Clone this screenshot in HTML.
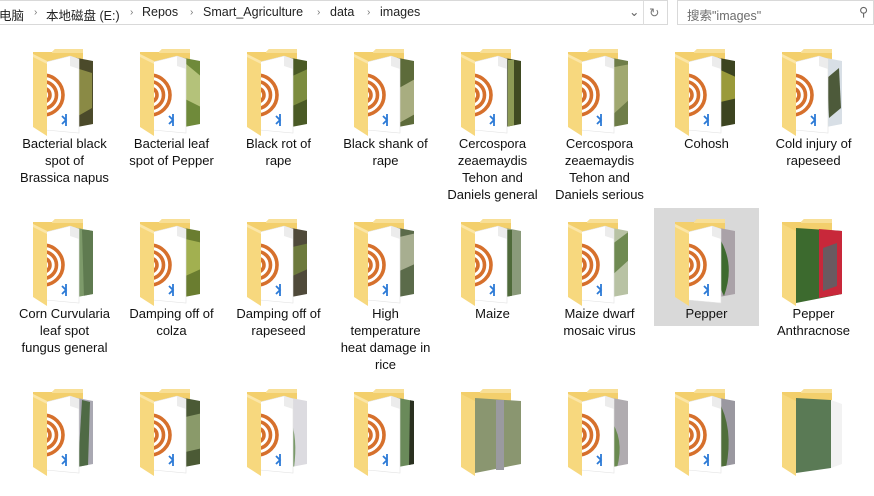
<!DOCTYPE html>
<html><head><meta charset="utf-8"><style>
*{margin:0;padding:0;box-sizing:border-box}
body{width:874px;height:474px;overflow:hidden;background:#fff;font-family:"Liberation Sans","Noto Sans CJK SC",sans-serif;position:relative}
.addr{position:absolute;left:-1px;top:0;width:669px;height:25px;border:1px solid #d9d9d9;border-left:none;font-size:12.5px;color:#222}
.addr span{position:absolute;top:4px}
.sep{color:#777;font-size:10px;top:6px!important}
.search{position:absolute;left:677px;top:0;width:197px;height:25px;border:1px solid #d9d9d9;font-size:12.5px;color:#6d6d6d}
.cell{position:absolute;width:105px;height:118px}
.cell svg{position:absolute;left:0;top:0}
.lab{position:absolute;top:97px;left:0;width:105px;text-align:center;font-size:13px;line-height:17px;color:#111}
.sel{background:#d9d9d9}
</style></head><body>
<svg width="0" height="0" style="position:absolute"><defs>
<clipPath id="pg"><path d="M34,24 L58,18 L67,21 L67,95 L34,92Z"/></clipPath>
<clipPath id="ph"><path d="M60,19 L81,23 L81,86 L60,90Z"/></clipPath>
<symbol id="back" viewBox="0 0 105 100"><path d="M21,14 L40,14 L43,11 L71,11 L71,86 L21,86Z" fill="#f3cf6c"/><path d="M40,14 L43,11 L71,11 L71,15 L40,15Z" fill="#f8df96"/></symbol>
<symbol id="front" viewBox="0 0 105 100">
<path d="M34,24 L58,18 L67,21 L67,95 L34,92Z" fill="#fff" stroke="#e2e2e2" stroke-width="0.6"/>
<path d="M58,18 L58,28 L67,31 L67,21Z" fill="#ececec"/>
<g clip-path="url(#pg)" fill="none" stroke="#d6702c" stroke-width="3.6"><circle cx="31" cy="57" r="7"/><circle cx="31" cy="57" r="13.5"/><circle cx="31" cy="57" r="20"/></g>
<path d="M50,78 L54,82 L50,86 M54,76 L54,88" stroke="#2c7ad6" stroke-width="1.8" fill="none"/>
<path d="M21,16 L35,23 L35,98 L21,89Z" fill="#f7d87e"/><path d="M21,16 L35,23 L35,26 L21,19Z" fill="#fbe6a8"/>
</symbol></defs></svg>

<div class="addr"><span style="left:0">电脑</span><span class="sep" style="left:35px">›</span><span style="left:47px">本地磁盘 (E:)</span><span class="sep" style="left:131px">›</span><span style="left:143px">Repos</span><span class="sep" style="left:191px">›</span><span style="left:204px">Smart_Agriculture</span><span class="sep" style="left:318px">›</span><span style="left:331px">data</span><span class="sep" style="left:368px">›</span><span style="left:381px">images</span>
<span style="left:630px;top:3px;color:#666">⌄</span><div style="position:absolute;left:644px;top:0;width:1px;height:24px;background:#ddd"></div><span style="left:650px;color:#777">↻</span></div>
<div class="search"><span style="position:absolute;left:9px;top:4px">搜索"images"</span><span style="position:absolute;left:181px;top:3px;color:#666">⚲</span></div>

<!-- row 1 -->
<div class="cell" style="left:12px;top:38px"><svg width="105" height="100"><use href="#back"/><g clip-path="url(#ph)"><rect x="55" y="15" width="30" height="80" fill="#4b4a2a"/><path d="M64,30 L80,35 L80,70 L66,78Z" fill="#8a8a45"/></g><use href="#front"/></svg><div class="lab">Bacterial black<br>spot of<br>Brassica napus</div></div>
<div class="cell" style="left:119px;top:38px"><svg width="105" height="100"><use href="#back"/><g clip-path="url(#ph)"><rect x="55" y="15" width="30" height="80" fill="#6f8a3a"/><path d="M66,25 L84,40 L84,70 L64,60Z" fill="#b4c27a"/></g><use href="#front"/></svg><div class="lab">Bacterial leaf<br>spot of Pepper</div></div>
<div class="cell" style="left:226px;top:38px"><svg width="105" height="100"><use href="#back"/><g clip-path="url(#ph)"><rect x="55" y="15" width="30" height="80" fill="#4a5a25"/><path d="M62,40 L84,30 L84,60 L62,70Z" fill="#7c8c3f"/></g><use href="#front"/></svg><div class="lab">Black rot of<br>rape</div></div>
<div class="cell" style="left:333px;top:38px"><svg width="105" height="100"><use href="#back"/><g clip-path="url(#ph)"><rect x="55" y="15" width="30" height="80" fill="#5d6b3a"/><path d="M66,50 L84,40 L84,75 L66,85Z" fill="#a8ad80"/></g><use href="#front"/></svg><div class="lab">Black shank of<br>rape</div></div>
<div class="cell" style="left:440px;top:38px"><svg width="105" height="100"><use href="#back"/><g clip-path="url(#ph)"><rect x="55" y="15" width="30" height="80" fill="#3f4a22"/><path d="M68,22 L74,22 L74,90 L68,90Z" fill="#8c9a55"/></g><use href="#front"/></svg><div class="lab">Cercospora<br>zeaemaydis<br>Tehon and<br>Daniels general</div></div>
<div class="cell" style="left:547px;top:38px"><svg width="105" height="100"><use href="#back"/><g clip-path="url(#ph)"><rect x="55" y="15" width="30" height="80" fill="#6e7d48"/><path d="M62,30 L84,26 L84,60 L62,80Z" fill="#a0a870"/></g><use href="#front"/></svg><div class="lab">Cercospora<br>zeaemaydis<br>Tehon and<br>Daniels serious</div></div>
<div class="cell" style="left:654px;top:38px"><svg width="105" height="100"><use href="#back"/><g clip-path="url(#ph)"><rect x="55" y="15" width="30" height="80" fill="#3c4420"/><path d="M62,30 L84,40 L84,60 L62,65Z" fill="#9a9a3a"/></g><use href="#front"/></svg><div class="lab">Cohosh</div></div>
<div class="cell" style="left:761px;top:38px"><svg width="105" height="100"><use href="#back"/><g clip-path="url(#ph)"><rect x="55" y="15" width="30" height="80" fill="#d8dfe6"/><path d="M66,40 L78,30 L80,70 L68,80Z" fill="#4d5a3a"/></g><use href="#front"/></svg><div class="lab">Cold injury of<br>rapeseed</div></div>
<!-- row 2 -->
<div class="cell" style="left:12px;top:208px"><svg width="105" height="100"><use href="#back"/><g clip-path="url(#ph)"><rect x="55" y="15" width="30" height="80" fill="#7d9a6a"/><path d="M70,22 L84,22 L84,88 L72,90Z" fill="#5f7a50"/></g><use href="#front"/></svg><div class="lab">Corn Curvularia<br>leaf spot<br>fungus general</div></div>
<div class="cell" style="left:119px;top:208px"><svg width="105" height="100"><use href="#back"/><g clip-path="url(#ph)"><rect x="55" y="15" width="30" height="80" fill="#6a7d30"/><path d="M62,30 L84,35 L84,60 L62,70Z" fill="#a2b050"/></g><use href="#front"/></svg><div class="lab">Damping off of<br>colza</div></div>
<div class="cell" style="left:226px;top:208px"><svg width="105" height="100"><use href="#back"/><g clip-path="url(#ph)"><rect x="55" y="15" width="30" height="80" fill="#4f4a3a"/><path d="M62,40 L84,35 L84,60 L62,70Z" fill="#6d7a3d"/></g><use href="#front"/></svg><div class="lab">Damping off of<br>rapeseed</div></div>
<div class="cell" style="left:333px;top:208px"><svg width="105" height="100"><use href="#back"/><g clip-path="url(#ph)"><rect x="55" y="15" width="30" height="80" fill="#5b6b4a"/><path d="M62,30 L84,25 L84,55 L62,65Z" fill="#a7ae90"/></g><use href="#front"/></svg><div class="lab">High<br>temperature<br>heat damage in<br>rice</div></div>
<div class="cell" style="left:440px;top:208px"><svg width="105" height="100"><use href="#back"/><g clip-path="url(#ph)"><rect x="55" y="15" width="30" height="80" fill="#8a9a7a"/><path d="M66,22 L72,22 L72,90 L66,90Z" fill="#4f6a3a"/></g><use href="#front"/></svg><div class="lab">Maize</div></div>
<div class="cell" style="left:547px;top:208px"><svg width="105" height="100"><use href="#back"/><g clip-path="url(#ph)"><rect x="55" y="15" width="30" height="80" fill="#b8c2a4"/><path d="M60,40 L84,22 L84,50 L62,70Z" fill="#6f8a52"/></g><use href="#front"/></svg><div class="lab">Maize dwarf<br>mosaic virus</div></div>
<div class="cell sel" style="left:654px;top:208px"><svg width="105" height="100"><use href="#back"/><g clip-path="url(#ph)"><rect x="55" y="15" width="30" height="80" fill="#aaa2a8"/><path d="M64,28 Q82,55 70,88 Q56,60 64,28Z" fill="#3d6a2e"/></g><use href="#front"/></svg><div class="lab">Pepper</div></div>
<div class="cell" style="left:761px;top:208px"><svg width="105" height="100"><use href="#back"/><path d="M35,20 L81,23 L81,86 L35,95Z" fill="#3c6a2e"/><path d="M58,21 L81,23 L81,86 L58,90Z" fill="#c8283a"/><path d="M62,40 L76,35 L76,78 L62,83Z" fill="#6a5a60"/><path d="M21,16 L35,23 L35,98 L21,89Z" fill="#f7d87e"/></svg><div class="lab">Pepper<br>Anthracnose</div></div>
<!-- row 3 -->
<div class="cell" style="left:12px;top:378px"><svg width="105" height="100"><use href="#back"/><g clip-path="url(#ph)"><rect x="55" y="15" width="30" height="80" fill="#a9a8b2"/><path d="M70,22 L78,24 L76,88 L66,90Z" fill="#4f6a45"/></g><use href="#front"/></svg></div>
<div class="cell" style="left:119px;top:378px"><svg width="105" height="100"><use href="#back"/><g clip-path="url(#ph)"><rect x="55" y="15" width="30" height="80" fill="#4b5a35"/><path d="M62,40 L84,35 L84,70 L62,75Z" fill="#8a9a6a"/></g><use href="#front"/></svg></div>
<div class="cell" style="left:226px;top:378px"><svg width="105" height="100"><use href="#back"/><g clip-path="url(#ph)"><rect x="55" y="15" width="30" height="80" fill="#dcdbe0"/><path d="M64,40 Q72,60 68,90 L62,90Z" fill="#7a9a6a"/></g><use href="#front"/></svg></div>
<div class="cell" style="left:333px;top:378px"><svg width="105" height="100"><use href="#back"/><g clip-path="url(#ph)"><rect x="55" y="15" width="30" height="80" fill="#6a8a5a"/><path d="M77,22 L84,22 L84,88 L76,90Z" fill="#2a3020"/></g><use href="#front"/></svg></div>
<div class="cell" style="left:440px;top:378px"><svg width="105" height="100"><use href="#back"/><path d="M35,20 L81,23 L81,86 L35,95Z" fill="#8a9670"/><path d="M56,22 L64,22 L64,92 L56,92Z" fill="#9a9aa0"/><path d="M21,16 L35,23 L35,98 L21,89Z" fill="#f7d87e"/></svg></div>
<div class="cell" style="left:547px;top:378px"><svg width="105" height="100"><use href="#back"/><g clip-path="url(#ph)"><rect x="55" y="15" width="30" height="80" fill="#b0acb0"/><path d="M62,40 Q78,60 70,90 L62,90Z" fill="#6a8a50"/></g><use href="#front"/></svg></div>
<div class="cell" style="left:654px;top:378px"><svg width="105" height="100"><use href="#back"/><g clip-path="url(#ph)"><rect x="55" y="15" width="30" height="80" fill="#9a98a0"/><path d="M64,22 Q80,50 72,90 L64,90Z" fill="#4f6e3a"/></g><use href="#front"/></svg></div>
<div class="cell" style="left:761px;top:378px"><svg width="105" height="100"><use href="#back"/><path d="M35,20 L70,22 L70,90 L35,95Z" fill="#5a7a55"/><path d="M70,22 L81,26 L81,86 L70,90Z" fill="#f2f2f2"/><path d="M21,16 L35,23 L35,98 L21,89Z" fill="#f7d87e"/></svg></div>
</body></html>
